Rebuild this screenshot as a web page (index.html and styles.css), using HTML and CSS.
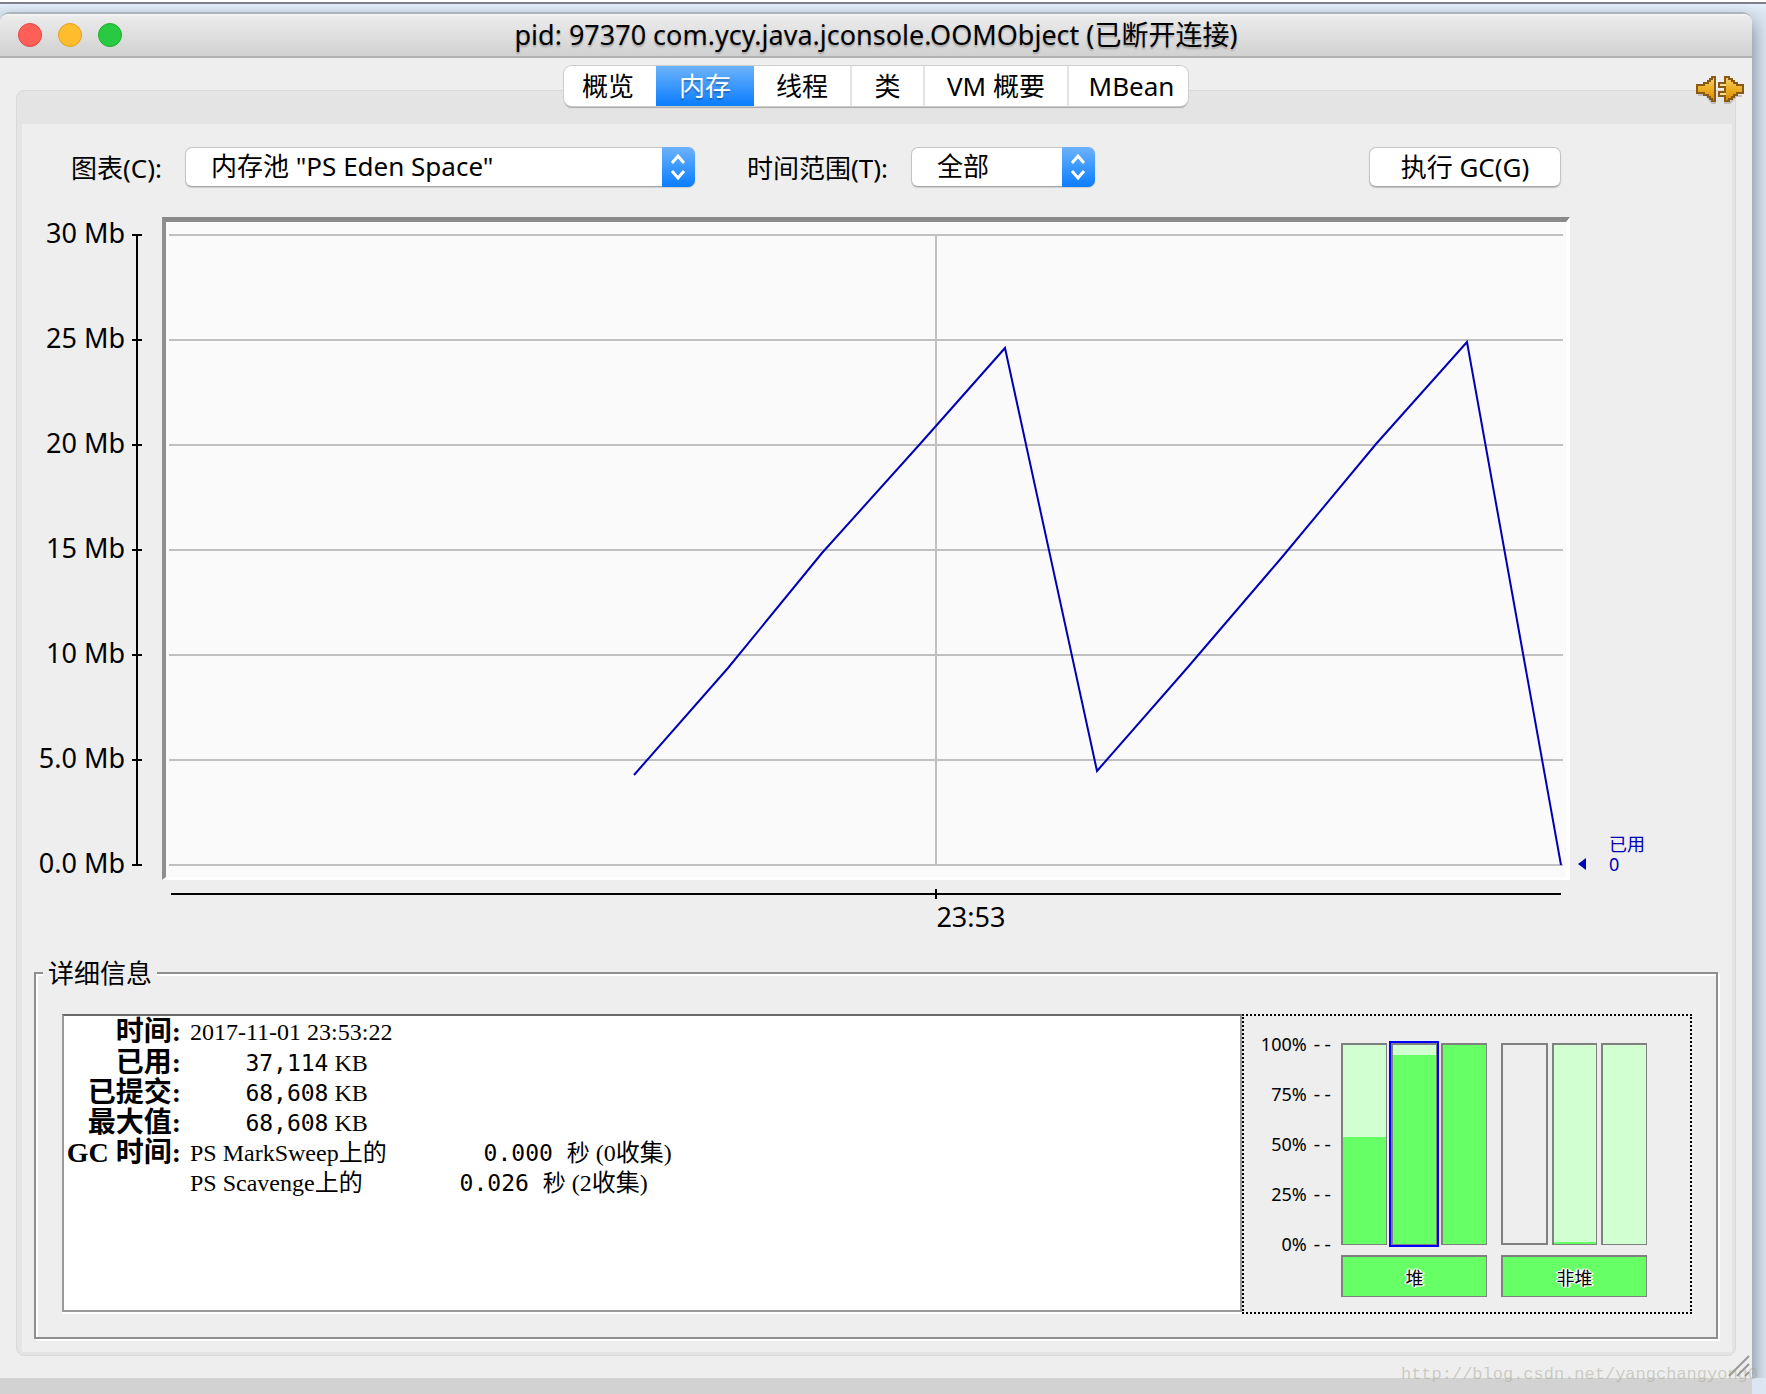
FILE: index.html
```html
<!DOCTYPE html>
<html lang="zh-CN">
<head>
<meta charset="utf-8">
<title>pid: 97370 com.ycy.java.jconsole.OOMObject</title>
<link rel="stylesheet" href="styles.css">
</head>
<body>
<div class="desktop">
  <div class="window">
    <header class="titlebar">
      <div class="lights">
        <button class="light close" aria-label="关闭"></button>
        <button class="light minimize" aria-label="最小化"></button>
        <button class="light maximize" aria-label="缩放"></button>
      </div>
      <h1 class="title">pid: 97370 com.ycy.java.jconsole.OOMObject (已断开连接)</h1>
    </header>

    <nav class="tabs">
      <button class="tab">概览</button>
      <button class="tab active">内存</button>
      <button class="tab">线程</button>
      <button class="tab tab-narrow">类</button>
      <button class="tab tab-wide">VM 概要</button>
      <button class="tab tab-last">MBean</button>
    </nav>
    <svg class="plug" viewBox="0 0 24 14" aria-hidden="true">
      <defs>
        <linearGradient id="gold" x1="0" y1="0" x2="0" y2="1">
          <stop offset="0" stop-color="#f4cf70"/>
          <stop offset="0.5" stop-color="#ecae22"/>
          <stop offset="1" stop-color="#d88a06"/>
        </linearGradient>
      </defs>
      <path d="M1 9.500h4l3 4h2M14 13.500h3l3-3.500h3" fill="none" stroke="#999" stroke-opacity=".5"/>
      <path d="M.5 4.500h3.500v-1h2v-1h1v-1h1v-1h1.500v12h-1.500v-1h-1v-1h-1v-1h-2v-1h-3.500z" fill="url(#gold)" stroke="#8a5a14"/>
      <path d="M14.500 .5h2v1h1.500v1h1v1h1.500v1h3v4h-3v1h-1.500v1h-1v1h-1.500v1h-2v-2.500h-3v-2h3v-2.500h-3v-2h3z" fill="url(#gold)" stroke="#8a5a14"/>
      <path d="M12 4.500h3M12 9h3" stroke="#f6dc93"/>
    </svg>

    <main class="pane">
      <div class="memory">
        <form class="controls">
          <label class="label-chart" for="chart">图表(C):</label>
          <span class="combo combo-chart">
            <select id="chart"><option>内存池 "PS Eden Space"</option></select>
            <svg class="arrows" viewBox="0 0 33 40" aria-hidden="true"><path d="M10 16l6-7 6 7M10 24l6 7 6-7"/></svg>
          </span>
          <label class="label-range" for="range">时间范围(T):</label>
          <span class="combo combo-range">
            <select id="range"><option>全部</option></select>
            <svg class="arrows" viewBox="0 0 33 40" aria-hidden="true"><path d="M10 16l6-7 6 7M10 24l6 7 6-7"/></svg>
          </span>
          <button class="gc" type="button">执行 GC(G)</button>
        </form>

        <section class="chart">
          <div class="y-axis">
            <div class="y-labels">
              <span>30 Mb</span><span>25 Mb</span><span>20 Mb</span><span>15 Mb</span><span>10 Mb</span><span>5.0 Mb</span><span>0.0 Mb</span>
            </div>
            <div class="y-ticks"><i></i><i></i><i></i><i></i><i></i><i></i><i></i></div>
          </div>
          <div class="plot">
            <svg viewBox="166 222 1400 655" preserveAspectRatio="none" aria-hidden="true">
              <path class="grid" d="M169 235H1563M169 340H1563M169 445H1563M169 550H1563M169 655H1563M169 760H1563M169 865H1563M936 235V865"/>
              <polyline class="usage" points="634,775 728,668 822,553 920,444 1005,348 1097,771 1188,667 1283,556 1376,444 1467,342 1561,865"/>
            </svg>
          </div>
          <div class="marker"><span class="pointer"></span><span>已用<br>0</span></div>
          <div class="x-axis"><span class="x-label">23:53</span></div>
        </section>

        <fieldset class="details">
          <legend>详细信息</legend>
          <div class="details-row">
            <div class="report">
              <table>
                <tr><th>时间:</th><td>2017-11-01 23:53:22</td></tr>
                <tr><th>已用:</th><td><code>    37,114</code> KB</td></tr>
                <tr><th>已提交:</th><td><code>    68,608</code> KB</td></tr>
                <tr><th>最大值:</th><td><code>    68,608</code> KB</td></tr>
                <tr><th>GC 时间:</th><td>PS MarkSweep上的<code>       0.000 秒</code> (0收集)</td></tr>
                <tr><th></th><td>PS Scavenge上的<code>       0.026 秒</code> (2收集)</td></tr>
              </table>
            </div>
            <div class="pools">
              <div class="scale">
                <span>100% <b>--</b></span><span>75% <b>--</b></span><span>50% <b>--</b></span><span>25% <b>--</b></span><span>0% <b>--</b></span>
              </div>
              <div class="pool-group">
                <div class="bars">
                  <div class="bar"><div class="fill" style="height:54%"></div></div>
                  <div class="bar selected"><div class="fill" style="height:95%"></div></div>
                  <div class="bar"><div class="fill" style="height:100%"></div></div>
                </div>
                <button class="heap" type="button">堆</button>
              </div>
              <div class="pool-group">
                <div class="bars">
                  <div class="bar empty"></div>
                  <div class="bar"><div class="fill" style="height:1%"></div></div>
                  <div class="bar"></div>
                </div>
                <button class="heap" type="button">非堆</button>
              </div>
            </div>
          </div>
        </fieldset>
      </div>
    </main>
    <svg class="grip" viewBox="0 0 22 22" aria-hidden="true"><path d="M1 21L21 1M9 21L21 9M17 21l4-4"/></svg>
  </div>
  <div class="watermark">http://blog.csdn.net/yangchangyong0</div>
</div>
</body>
</html>
```
FILE: styles.css
```css
* {
  box-sizing: border-box;
}

body {
  margin: 0;
  color: #000;
  font-family: "Noto Sans", "Noto Sans CJK SC", sans-serif;
  font-size: 26px;
}

button,
select {
  margin: 0;
  font: inherit;
  color: inherit;
}

.desktop {
  position: relative;
  display: flex;
  flex-direction: column;
  min-height: 100vh;
  padding: 12px 14px 16px 0;
  overflow: hidden;
  background:
    linear-gradient(#fff 2px, #808088 2px, #808088 4px, transparent 4px),
    linear-gradient(#d2d2d2, #d2d2d2) 0 100% / calc(100% - 14px) 16px no-repeat,
    linear-gradient(#e8f3fe, #dce6f2 14px, #dce6f2);
}

.window {
  position: relative;
  display: flex;
  flex: 1;
  flex-direction: column;
  border-top: 2px solid #acb5be;
  border-radius: 10px 10px 0 0;
  background: #eee;
  box-shadow: 0 10px 18px 2px rgba(50, 60, 80, 0.55);
  clip-path: inset(-8px -14px 0 0);
}

/* Title bar */
.titlebar {
  position: relative;
  display: flex;
  align-items: center;
  justify-content: center;
  height: 44px;
  border-bottom: 2px solid #b1b1b1;
  border-radius: 8px 8px 0 0;
  background: linear-gradient(#f5f5f5, #ebebeb 3px, #d1d1d1);
}

.lights {
  position: absolute;
  left: 18px;
  display: flex;
  gap: 16px;
}

.light {
  width: 24px;
  height: 24px;
  padding: 0;
  border: 1px solid #e24640;
  border-radius: 50%;
  background: #ff5f57;
}

.minimize {
  border-color: #dfa123;
  background: #ffbd2e;
}

.maximize {
  border-color: #1dad2b;
  background: #28ca42;
}

.title {
  margin: 0;
  font-size: 27px;
  font-weight: 400;
  line-height: 42px;
  text-shadow: 0 2px 2px rgba(0, 0, 0, 0.25);
}

/* Tabs */
.tabs {
  position: relative;
  z-index: 1;
  display: flex;
  align-self: center;
  height: 40px;
  margin-top: 8px;
  border-radius: 8px;
  background: #fff;
  box-shadow: 0 0 0 1px #cdcdcd, 0 2px 1px #a8a8a8;
}

.tab {
  width: 98px;
  padding: 0;
  border: 0;
  border-right: 2px solid #e4e4e4;
  background: none;
  line-height: 38px;
}

.tab:first-child {
  width: 92px;
  padding-right: 4px;
  border-right: 0;
}

.tab.active {
  border: 0;
  background: linear-gradient(#6cb3fa, #0a7dff);
  color: #fff;
  text-shadow: 0 2px 1px rgba(0, 0, 0, 0.25);
}

.tab.tab-narrow {
  width: 73px;
}

.tab.tab-wide {
  width: 144px;
}

.tab.tab-last {
  width: 119px;
  padding-left: 6px;
  border: 0;
}

.plug {
  position: absolute;
  z-index: 1;
  top: 62px;
  right: 8px;
  width: 48px;
  height: 28px;
}

/* Pane */
.pane {
  display: flex;
  flex: 1;
  margin: -16px 16px 22px;
  padding: 33px 3px 3px 5px;
  border: 1px solid #d9d9d9;
  border-radius: 8px;
  background: #e4e4e4;
}

.memory {
  display: flex;
  flex: 1;
  flex-direction: column;
  background: #eee;
}

.controls {
  display: flex;
  align-items: center;
  margin: 23px 171px 0 49px;
}

.label-chart {
  width: 114px;
}

.label-range {
  width: 164px;
}

.combo {
  position: relative;
  display: flex;
  height: 40px;
}

.combo-chart {
  width: 510px;
  margin-right: 52px;
}

.combo-range {
  width: 184px;
}

.combo select {
  width: 100%;
  padding: 0 40px 2px 25px;
  border: 1px solid #c4c4c4;
  border-bottom-color: #a6a6a6;
  border-radius: 7px;
  background: #fff;
  box-shadow: 0 1px 1px rgba(0, 0, 0, 0.15);
  appearance: none;
}

.arrows {
  position: absolute;
  top: 0;
  right: 0;
  width: 33px;
  height: 40px;
  border-radius: 0 7px 7px 0;
  background: linear-gradient(#6cb3fa, #0a7dff);
  fill: none;
  stroke: #fff;
  stroke-width: 3px;
  pointer-events: none;
}

.gc {
  width: 192px;
  height: 40px;
  margin-left: auto;
  padding: 0;
  border: 1px solid #c4c4c4;
  border-bottom-color: #a6a6a6;
  border-radius: 7px;
  background: #fff;
  box-shadow: 0 1px 1px rgba(0, 0, 0, 0.2);
  line-height: 36px;
}

/* Chart */
.chart {
  display: grid;
  flex: 1;
  grid-template-columns: 140px 1fr 162px;
  grid-template-rows: 1fr 60px;
  margin-top: 30px;
}

.y-axis {
  display: flex;
  gap: 7px;
  padding: 1px 20px 0 0;
}

.y-labels {
  display: flex;
  flex: 1;
  flex-direction: column;
  justify-content: space-between;
  margin-bottom: 2px;
  font-size: 27px;
  line-height: 30px;
  text-align: right;
}

.y-ticks {
  display: flex;
  flex-direction: column;
  justify-content: space-between;
  width: 10px;
  margin: 16px 0 14px;
  background: linear-gradient(#000, #000) 50% 0 / 2px 100% no-repeat;
}

.y-ticks i {
  height: 2px;
  background: #000;
}

.plot {
  display: flex;
  min-height: 300px;
  border: 4px solid;
  border-width: 5px 4px 3px 4px;
  border-color: #8a8a8a #fff #fff #8f8f8f;
  background: #fafafa;
}

.plot svg {
  flex: 1;
  width: 100%;
  height: 100%;
  fill: none;
}

.plot path,
.plot polyline {
  vector-effect: non-scaling-stroke;
  stroke-width: 2px;
}

.grid {
  stroke: #c0c0c0;
}

.usage {
  stroke: #0000b4;
}

.marker {
  display: flex;
  align-items: flex-end;
  gap: 23px;
  padding: 0 0 6px 8px;
  color: #0000b4;
  font-size: 18px;
  line-height: 20px;
}

.pointer {
  margin-bottom: 4px;
  border: 6px solid transparent;
  border-right: 8px solid #0000b4;
  border-left: 0;
}

.x-axis {
  grid-column: 2;
  margin-top: 9px;
  padding: 10px 0 0 55%;
  background:
    linear-gradient(#000, #000) 9px 4px / calc(100% - 18px) 2px no-repeat,
    linear-gradient(#000, #000) 55% 0 / 2px 10px no-repeat;
}

.x-label {
  font-size: 27px;
  line-height: 36px;
}

/* Details */
.details {
  min-width: 0;
  margin: 19px 14px 13px 12px;
  padding: 27px 24px 23px 26px;
  border: 2px solid #8f8f8f;
  box-shadow: 2px 2px 0 #fff, inset 2px 2px 0 #fff;
}

.details legend {
  margin-left: -19px;
  padding: 0 5px;
  background: #eee;
  line-height: 28px;
}

.details-row {
  display: flex;
}

.report {
  flex: 1;
  border: 2px solid #9a9a9a;
  border-top-color: #6a6a6a;
  background: #fff;
  box-shadow: 0 2px 0 #fff;
  margin-bottom: 2px;
}

.report table {
  border-collapse: collapse;
  font-family: "Liberation Serif", "Noto Sans CJK SC", serif;
  font-size: 24px;
}

.report tr {
  height: 30px;
  line-height: 30px;
}

.report tr:first-child {
  height: 32px;
}

.report th {
  width: 117px;
  padding: 0;
  font-size: 28px;
  font-weight: 700;
  text-align: right;
  white-space: nowrap;
}

.report td {
  padding: 0 0 0 9px;
}

.report code {
  font-family: "DejaVu Sans Mono", "Noto Sans CJK SC", monospace;
  font-size: 23px;
  white-space: pre;
}

.pools {
  display: flex;
  gap: 14px;
  width: 450px;
  height: 300px;
  padding: 18px 43px 0 0;
  border: 2px dotted #000;
}

.scale {
  display: flex;
  flex-direction: column;
  flex: 1;
  justify-content: space-between;
  height: 220px;
  margin-right: -6px;
  font-size: 18px;
  line-height: 20px;
  text-align: right;
}

.scale b {
  font-family: "Liberation Mono", monospace;
  font-size: 18px;
  font-weight: 400;
  line-height: 1px;
}

.pool-group {
  width: 146px;
  padding-top: 9px;
}

.bars {
  display: flex;
  gap: 4px;
  height: 202px;
  margin-bottom: 10px;
}

.bar {
  display: flex;
  flex: 1;
  align-items: flex-end;
  border: 2px solid #808080;
  border-width: 2px 1px 1px 2px;
  background: #d1ffd1;
}

.bar.empty {
  border-width: 2px;
  background: #eee;
}

.bar.selected {
  outline: 2px solid #00f;
}

.fill {
  width: 100%;
  background: #66ff66;
}

.heap {
  width: 100%;
  height: 42px;
  padding: 0;
  border: 2px solid #808080;
  border-width: 2px 1px 1px 2px;
  background: #66ff66;
  font-size: 18px;
  text-shadow: 1px 0 #fff, -1px 0 #fff, 0 1px #fff, 0 -1px #fff, 1px 1px #fff, -1px -1px #fff, 2px 0 #fff, -2px 0 #fff;
}

.grip {
  position: absolute;
  right: 2px;
  bottom: 1px;
  width: 22px;
  height: 22px;
  fill: none;
  stroke: #999;
  stroke-width: 2px;
}

.watermark {
  position: absolute;
  right: 8px;
  bottom: 8px;
  color: rgba(160, 160, 140, 0.45);
  font-family: "Liberation Mono", monospace;
  font-size: 17px;
  line-height: 22px;
}
```
